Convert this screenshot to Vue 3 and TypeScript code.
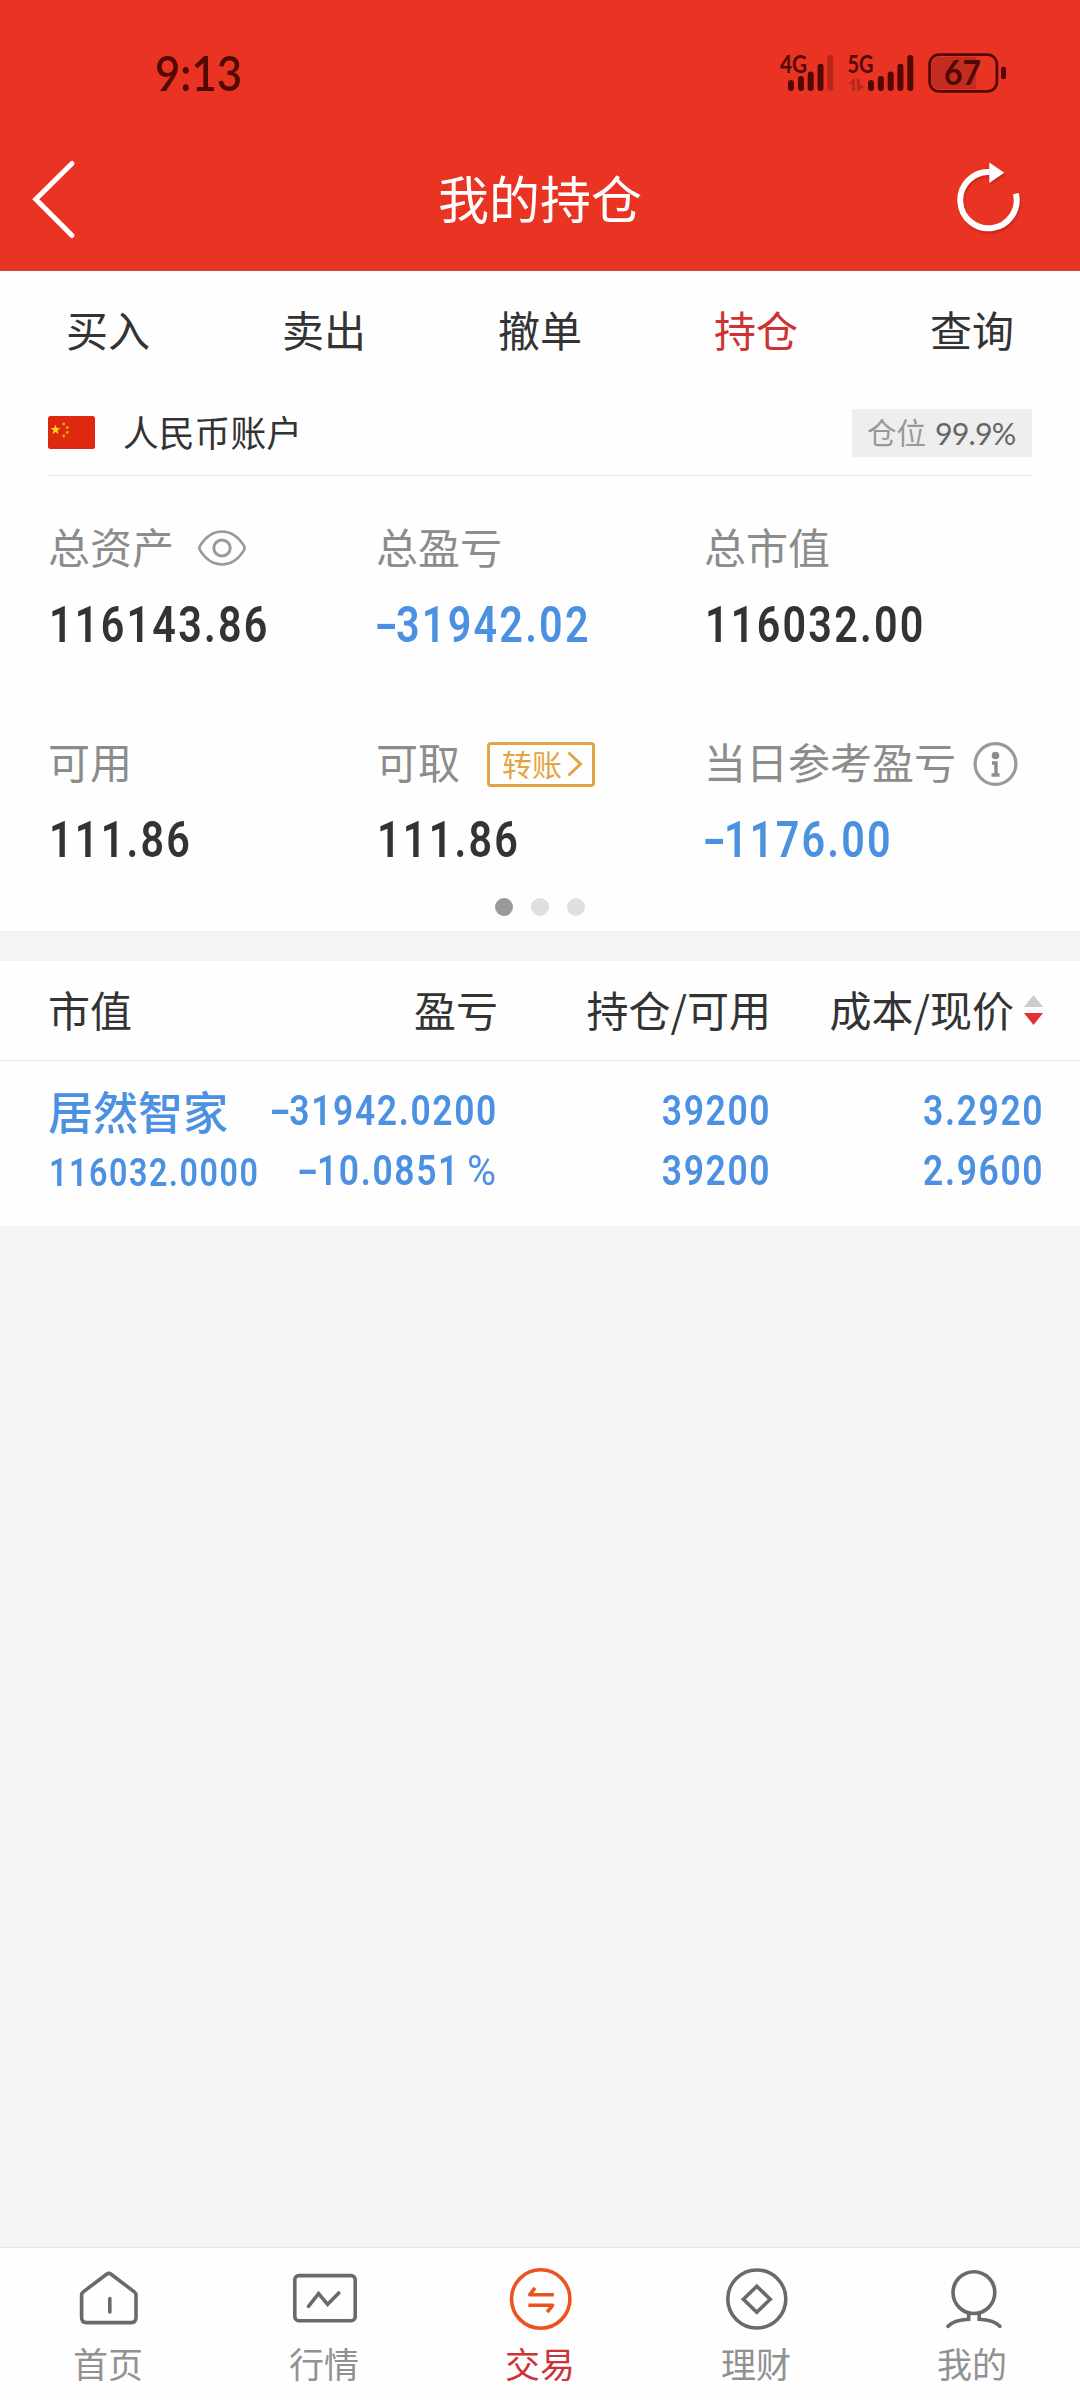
<script setup lang="ts">
interface Stat {
  label: string
  value: string
  extra?: 'eye' | 'transfer' | 'info'
}

interface NavItem {
  label: string
  icon: 'home' | 'market' | 'trade' | 'finance' | 'me'
}

const tabs: string[] = ['买入', '卖出', '撤单', '持仓', '查询']
const activeTab = '持仓'

const stats: Stat[] = [
  { label: '总资产', value: '116143.86', extra: 'eye' },
  { label: '总盈亏', value: '-31942.02' },
  { label: '总市值', value: '116032.00' },
  { label: '可用', value: '111.86' },
  { label: '可取', value: '111.86', extra: 'transfer' },
  { label: '当日参考盈亏', value: '-1176.00', extra: 'info' },
]

const navItems: NavItem[] = [
  { label: '首页', icon: 'home' },
  { label: '行情', icon: 'market' },
  { label: '交易', icon: 'trade' },
  { label: '理财', icon: 'finance' },
  { label: '我的', icon: 'me' },
]

const isLoss = (v: string): boolean => v.startsWith('-')
const digits = (v: string): string => (isLoss(v) ? v.slice(1) : v)
</script>

<template>
  <div class="page">
    <header class="header">
      <div class="status">
        <span class="time">9:13</span>
        <svg class="status-icons" width="240" height="70" viewBox="772 38 240 70">
          <g fill="#520803">
            <text class="net" x="780" y="73" textLength="27" lengthAdjust="spacingAndGlyphs">4G</text>
            <rect x="788" y="80" width="6" height="11" rx="3" />
            <rect x="798" y="76" width="6" height="15" rx="3" />
            <rect x="807.7" y="71.5" width="6" height="19.5" rx="3" />
            <rect x="817.5" y="63.7" width="6" height="27.3" rx="3" />
            <rect x="827.3" y="55" width="6" height="36" rx="3" fill="#b9271b" />
            <text class="net" x="847.5" y="73" textLength="26" lengthAdjust="spacingAndGlyphs">5G</text>
            <path d="M848.5 84 L853.5 79 H855 V91 H852 V84 Z M857 79 H860 V85.5 H864.5 L859 91 H857 Z" fill="#b9271b" />
            <rect x="868" y="80" width="6" height="11" rx="3" />
            <rect x="877.8" y="76" width="6" height="15" rx="3" />
            <rect x="887.7" y="71.5" width="6" height="19.5" rx="3" />
            <rect x="897.4" y="63.7" width="6" height="27.3" rx="3" />
            <rect x="907.3" y="55" width="6" height="36" rx="3" />
            <path d="M976 57 H940 Q931.5 57 931.5 65.5 V80.5 Q931.5 89 940 89 H976 Z" fill="#c42c20" />
            <rect x="929.6" y="54.6" width="67.3" height="36.8" rx="9.5" fill="none" stroke="#520803" stroke-width="2.7" />
            <text class="battery" x="944" y="85" textLength="37" lengthAdjust="spacingAndGlyphs">67</text>
            <rect x="1001" y="66.7" width="5" height="12.5" rx="2.2" />
          </g>
        </svg>
      </div>
      <div class="navbar">
        <svg class="back" width="50" height="90" viewBox="30 154 50 90" fill="none" stroke="#fff" stroke-width="5" stroke-linecap="round">
          <path d="M72 163.500 L35.800 199.200 L72 235.500" />
        </svg>
        <h1 class="title">我的持仓</h1>
        <svg class="refresh" width="76" height="100" viewBox="950 149 76 100">
          <path d="M1015.900 193.600 A28.200 28.200 0 1 1 989.500 171.900" fill="none" stroke="#fff" stroke-width="6" />
          <path d="M989.300 162.500 L1004.300 172.700 L989.300 182.900 Z" fill="#fff" />
        </svg>
      </div>
    </header>

    <nav class="tabs">
      <span v-for="t in tabs" :key="t" class="tab" :class="{ active: t === activeTab }">{{ t }}</span>
    </nav>

    <section class="account">
      <div class="account-head">
        <svg class="flag" width="47" height="33" viewBox="0 0 47 33">
          <rect width="47" height="33" rx="2.5" fill="#de2910" />
          <path d="M7.500 8.500 L8.800 12 L12.200 12.100 L9.500 14.400 L10.500 18 L7.500 15.900 L4.500 18 L5.500 14.400 L2.800 12.100 L6.200 12 Z" fill="#ffd21f" />
          <g fill="#f0a818">
            <circle cx="15.7" cy="8" r="1.4" />
            <circle cx="19.3" cy="11.6" r="1.4" />
            <circle cx="19.3" cy="16.4" r="1.4" />
            <circle cx="15.7" cy="20" r="1.4" />
          </g>
        </svg>
        <span class="account-name">人民币账户</span>
        <span class="ratio">仓位<b>99.9%</b></span>
      </div>

      <div class="stats">
        <div v-for="s in stats" :key="s.label" class="stat">
          <div class="stat-label">
            <span>{{ s.label }}</span>
            <svg v-if="s.extra === 'eye'" class="eye" width="48" height="36" viewBox="0 0 48 37" preserveAspectRatio="none" fill="none" stroke="#999" stroke-width="2.6">
              <path d="M2.200 15.800 C8 6.500 15.500 1.500 24 1.500 C32.500 1.500 40 6.500 45.800 15.800 Q47.400 18.500 45.800 21.200 C40 30.500 32.500 35.500 24 35.500 C15.500 35.500 8 30.500 2.200 21.200 Q.6 18.500 2.200 15.800 Z" />
              <circle cx="24" cy="18.5" r="8.2" stroke-width="3" />
            </svg>
            <span v-if="s.extra === 'transfer'" class="transfer">
              转账
              <svg width="16" height="26" viewBox="0 0 16 26" fill="none" stroke="#e5a443" stroke-width="3">
                <path d="M1.500 1.500 L13.500 13 L1.500 24.500" />
              </svg>
            </span>
            <svg v-if="s.extra === 'info'" class="info" width="45" height="44" viewBox="0 0 45 44">
              <circle cx="22.5" cy="22" r="20.4" fill="none" stroke="#999" stroke-width="3.2" />
              <circle cx="22.5" cy="13.5" r="3.8" fill="#8c8c8c" />
              <path d="M19 21 H23 V33 M18.500 33 H26.500" fill="none" stroke="#8c8c8c" stroke-width="3.4" />
            </svg>
          </div>
          <div class="stat-value">
            <span class="num big" :class="{ loss: isLoss(s.value) }"><i v-if="isLoss(s.value)">-</i>{{ digits(s.value) }}</span>
          </div>
        </div>
      </div>

      <div class="dots"><span class="dot on"></span><span class="dot"></span><span class="dot"></span></div>
    </section>

    <section class="positions">
      <div class="row thead">
        <span class="c1">市值</span>
        <span class="c2">盈亏</span>
        <span class="c3">持仓/可用</span>
        <span class="c4">成本/现价
          <svg class="sort" width="19" height="30" viewBox="0 0 19 30">
            <path d="M9.500 0 L19 12 H0 Z" fill="#ccc" />
            <path d="M0 18 H19 L9.500 30 Z" fill="#e03030" />
          </svg>
        </span>
      </div>
      <div class="tbody">
        <div class="row">
          <span class="c1 name">居然智家</span>
          <span class="c2"><span class="num mid"><i>-</i>31942.0200</span></span>
          <span class="c3"><span class="num mid">39200</span></span>
          <span class="c4"><span class="num mid">3.2920</span></span>
        </div>
        <div class="row">
          <span class="c1 market-value"><span class="num small">116032.0000</span></span>
          <span class="c2"><span class="num mid"><i>-</i>10.0851<em>%</em></span></span>
          <span class="c3"><span class="num mid">39200</span></span>
          <span class="c4"><span class="num mid">2.9600</span></span>
        </div>
      </div>
    </section>

    <footer class="bottom">
      <div v-for="n in navItems" :key="n.icon" class="nav-item" :class="{ active: n.icon === 'trade' }">
        <svg width="72" height="72" viewBox="0 0 72 72" fill="none" stroke="currentColor" stroke-width="3.6" stroke-linecap="round" stroke-linejoin="round">
          <template v-if="n.icon === 'home'">
            <path d="M9.600 32.200 Q9.600 30.200 11.300 28.900 L34.500 11.200 Q36.800 9.700 39.100 11.200 L62.300 28.900 Q64 30.200 64 32.200 V54.600 Q64 59.600 59 59.600 H14.600 Q9.600 59.600 9.600 54.600 Z" />
            <path d="M37.800 35.500 V49" />
          </template>
          <template v-else-if="n.icon === 'market'">
            <rect x="6.8" y="12.6" width="60.4" height="45.1" rx="4" />
            <path d="M20.500 43.300 L30.600 30.700 L39.600 41.300 L50.800 30" stroke-linejoin="miter" />
          </template>
          <template v-else-if="n.icon === 'trade'">
            <circle cx="36.7" cy="36" r="29.2" />
            <path d="M49.800 31.700 H25.800 L31 24.900 M24.400 42.300 H48.500 L43.200 49.100" stroke-linecap="butt" />
          </template>
          <template v-else-if="n.icon === 'finance'">
            <circle cx="36.8" cy="36" r="29" />
            <path d="M36.800 23.300 L50.200 36.200 L36.800 49.200 L23.400 36.200 Z" stroke-linejoin="miter" />
          </template>
          <template v-else>
            <circle cx="37.9" cy="29.6" r="20.9" />
            <path d="M32.700 51 V56.200 C23 56.700 16 58.700 12 63.300 M43.200 51 V56.200 C52.900 56.700 59.900 58.700 63.900 63.300" stroke-linejoin="miter" />
          </template>
        </svg>
        <span class="nav-label">{{ n.label }}</span>
      </div>
    </footer>
  </div>
</template>

<style>
body {
  margin: 0;
}
</style>

<style scoped>
.page {
  width: 1080px;
  height: 2400px;
  display: flex;
  flex-direction: column;
  background: #f4f4f4;
  color: #333;
  font-family: "Noto Sans CJK SC", "Noto Sans", sans-serif;
  font-size: 42px;
  overflow: hidden;
}
.page * {
  box-sizing: border-box;
}
svg {
  display: block;
  flex: none;
  overflow: visible;
}
.header {
  height: 271px;
  background: #e93424;
  border-bottom: 1px solid #b94a3f;
}
.status {
  height: 140px;
  padding: 6px 68px 0 155px;
  display: flex;
  align-items: center;
  justify-content: space-between;
  color: #520803;
}
.time {
  font: 600 47.5px/60px Lato, sans-serif;
  transform: scaleX(0.92);
  transform-origin: left center;
}
.net {
  font: 700 25px Lato, sans-serif;
}
.battery {
  font: 700 33.5px Lato, sans-serif;
}
.navbar {
  height: 118px;
  padding: 0 54px 0 30px;
  display: flex;
  align-items: center;
  justify-content: space-between;
}
.title {
  flex: 1;
  margin: 0 0 0 50px;
  text-align: center;
  font-size: 51px;
  font-weight: 400;
  line-height: 70px;
  padding-bottom: 4px;
  color: #fff;
}
.refresh {
  filter: drop-shadow(1px 2px 1px rgba(120, 0, 0, 0.3));
}
.tabs {
  height: 114px;
  padding-top: 1px;
  display: flex;
  align-items: center;
  background: #fefefe;
}
.tab {
  flex: 1;
  text-align: center;
  line-height: 60px;
}
.tab.active {
  color: #cf3232;
}
.account {
  height: 546px;
  background: #fefefe;
}
.account-head {
  height: 91px;
  margin: 0 48px;
  padding-top: 5px;
  border-bottom: 1px solid #ebebeb;
  display: flex;
  align-items: center;
}
.account-name {
  margin-left: 28px;
  font-size: 35.8px;
  line-height: 50px;
  padding-bottom: 3px;
}
.ratio {
  margin-left: auto;
  width: 180px;
  height: 48px;
  background: #eee;
  color: #999;
  font-size: 29.5px;
  line-height: 45px;
  padding-left: 15px;
  display: flex;
}
.ratio b {
  margin-left: 9px;
  font: 400 30.5px/48px Lato, sans-serif;
  letter-spacing: -0.9px;
  color: #666;
}
.stats {
  padding: 40px 48px 0;
  display: grid;
  grid-template-columns: repeat(3, 328px);
  row-gap: 76px;
}
.stat-label {
  height: 60px;
  margin-bottom: 19px;
  display: flex;
  align-items: center;
  color: #8c8c8c;
  line-height: 60px;
  white-space: nowrap;
}
.stat-value {
  height: 60px;
  padding-left: 1px;
  line-height: 60px;
  display: flex;
}
.eye {
  margin: 4px 0 0 24px;
}
.info {
  margin: 6px 0 0 17px;
}
.transfer {
  width: 108px;
  height: 45px;
  margin: 7px 0 0 27px;
  padding: 0 9px 0 12px;
  border: 3px solid #e5a443;
  border-radius: 4px;
  color: #e5a443;
  font-size: 30px;
  line-height: 36px;
  display: flex;
  justify-content: space-between;
}
.transfer svg {
  margin-top: 6px;
}
.num {
  display: inline-block;
  font-family: Roboto, sans-serif;
  transform: scaleX(0.84);
  transform-origin: left center;
  white-space: nowrap;
}
.num i {
  display: inline-block;
  width: 0.46em;
  font-style: normal;
  letter-spacing: 0;
  text-align: center;
  transform: scaleX(1.6);
}
.num em {
  display: inline-block;
  margin-left: 12px;
  font-style: normal;
  font-weight: 400;
  transform: scaleX(1.12);
  transform-origin: right center;
}
.big {
  font-size: 49.2px;
  font-weight: 600;
  letter-spacing: 2.65px;
}
.mid {
  font-size: 42.2px;
  font-weight: 600;
  letter-spacing: 1.95px;
}
.mid i {
  width: 0.51em;
  transform: scaleX(1.7);
}
.small {
  font-size: 38.4px;
  font-weight: 600;
  letter-spacing: 1.85px;
}
.loss {
  color: #4c90e2;
}
.dots {
  margin-top: 28px;
  display: flex;
  justify-content: center;
  gap: 18px;
}
.dot {
  width: 18px;
  height: 18px;
  border-radius: 50%;
  background: #dfdfdf;
}
.dot.on {
  background: #999;
}
.positions {
  margin-top: 30px;
  background: #fefefe;
}
.row {
  display: grid;
  grid-template-columns: 210px 240px 273px 273px;
  padding-left: 48px;
  white-space: nowrap;
}
.thead {
  height: 100px;
  border-bottom: 1px solid #ebebeb;
  line-height: 95px;
}
.c1,
.c2,
.c3,
.c4 {
  display: flex;
}
.c2,
.c3,
.c4 {
  justify-content: flex-end;
}
.c2 .num,
.c3 .num,
.c4 .num {
  transform-origin: right center;
}
.thead .c4 {
  padding-right: 1px;
}
.sort {
  margin: 34px 0 0 10px;
}
.tbody {
  height: 165px;
  padding-top: 20px;
  color: #4c90e2;
  line-height: 60px;
}
.name {
  font-size: 45px;
  font-weight: 500;
}
.market-value {
  height: 60px;
  padding: 2px 0 0 1px;
}
.bottom {
  margin-top: auto;
  height: 153px;
  border-top: 1px solid #e4e4e4;
  background: #fefefe;
  display: flex;
}
.nav-item {
  flex: 1;
  padding-top: 15px;
  display: flex;
  flex-direction: column;
  align-items: center;
  color: #6a6a6a;
}
.nav-label {
  margin-top: 1px;
  font-size: 35px;
  line-height: 54px;
  color: #919191;
}
.nav-item.active {
  color: #ec531f;
}
.active .nav-label {
  color: #cc3336;
}
</style>
